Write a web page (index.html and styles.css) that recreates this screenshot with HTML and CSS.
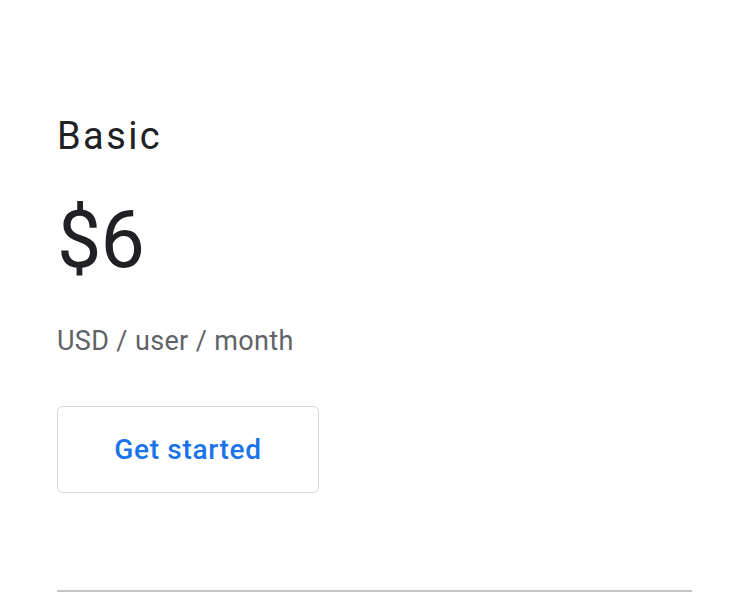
FILE: index.html
```html
<!DOCTYPE html>
<html lang="en">
<head>
<meta charset="utf-8">
<title>Basic plan</title>
<link rel="stylesheet" href="styles.css">
</head>
<body>
<section class="card">
  <h2 class="plan-name">Basic</h2>
  <div class="price">$6</div>
  <p class="unit">USD / user / month</p>
  <a class="cta" href="#">Get started</a>
  <hr class="divider">
</section>
</body>
</html>
```

FILE: styles.css
```css
html, body {
  margin: 0;
  padding: 0;
  background: #ffffff;
}

body {
  font-family: Roboto, "Liberation Sans", Arial, sans-serif;
  color: #202124;
}

.card {
  display: flex;
  flex-direction: column;
  align-items: flex-start;
  padding: 112px 54px 0 57px;
}

.plan-name {
  margin: 0;
  font-size: 38px;
  line-height: 48px;
  font-weight: 400;
  letter-spacing: 2.4px;
  color: #202124;
}

.price {
  margin-top: 40px;
  font-size: 79px;
  line-height: 80px;
  font-weight: 400;
  letter-spacing: -1px;
  color: #202124;
}

.unit {
  margin: 43px 0 0;
  font-size: 27px;
  line-height: 36px;
  letter-spacing: 0.35px;
  color: #5f6368;
}

.cta {
  margin-top: 47px;
  box-sizing: border-box;
  width: 262px;
  height: 87px;
  display: flex;
  align-items: center;
  justify-content: center;
  border: 1px solid #d4d6da;
  border-radius: 6px;
  color: #1a73e8;
  font-size: 28px;
  font-weight: 500;
  letter-spacing: 0.7px;
  text-decoration: none;
}

.divider {
  align-self: stretch;
  margin: 97px 0 0;
  border: 0;
  height: 2px;
  background: #c4c4c4;
}
```
